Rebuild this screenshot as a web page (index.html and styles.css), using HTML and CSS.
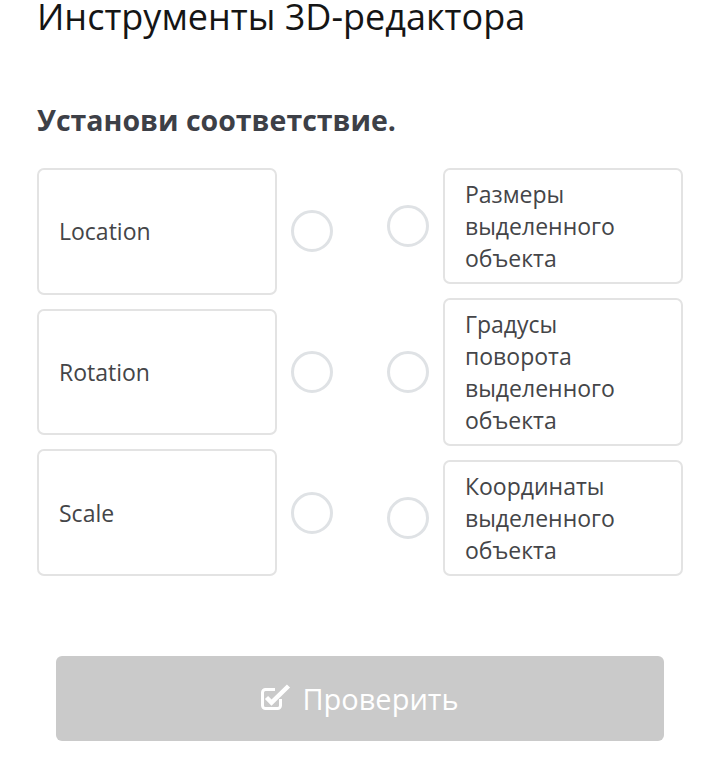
FILE: index.html
```html
<!DOCTYPE html>
<html lang="ru">
<head>
    <meta charset="UTF-8">
    <meta name="viewport" content="width=device-width, initial-scale=1.0">
    <title>Инструменты 3D-редактора</title>
    <link rel="stylesheet" href="styles.css">
</head>
<body>
    <div id="page">
        <h1 class="title">Инструменты 3D-редактора</h1>
        <div class="task">Установи соответствие.</div>

        <!-- Matching columns -->
        <div class="match">
            <div class="column left">
                <div class="item">
                    <div class="card">Location</div>
                    <span class="dot"></span>
                </div>
                <div class="item">
                    <div class="card">Rotation</div>
                    <span class="dot"></span>
                </div>
                <div class="item">
                    <div class="card">Scale</div>
                    <span class="dot"></span>
                </div>
            </div>
            <div class="column right">
                <div class="item">
                    <span class="dot"></span>
                    <div class="card">Размеры выделенного объекта</div>
                </div>
                <div class="item">
                    <span class="dot"></span>
                    <div class="card">Градусы поворота выделенного объекта</div>
                </div>
                <div class="item">
                    <span class="dot"></span>
                    <div class="card">Координаты выделенного объекта</div>
                </div>
            </div>
        </div>

        <button class="check-btn" disabled>
            <svg class="check-icon" width="30" height="26" viewBox="0 0 30 26">
                <path d="M19.5 15v6.5a3 3 0 0 1-3 3H4.5a3 3 0 0 1-3-3V8.5a3 3 0 0 1 3-3H14" fill="none" stroke="#fff" stroke-width="3"/>
                <path d="M5.5 13.5l5 5L27.5 2" fill="none" stroke="#fff" stroke-width="4.5"/>
            </svg>
            Проверить
        </button>
    </div>
</body>
</html>
```

FILE: styles.css
```css
body {
    margin: 0;
    background-color: #ffffff;
    font-family: "Open Sans", Arial, sans-serif;
}

#page {
    padding: 0 19px 0 37px;
}

.title {
    margin: 0;
    font-size: 36px;
    font-weight: 400;
    line-height: 34px;
    color: #151515;
}

.task {
    margin-top: 68px;
    font-size: 28.5px;
    font-weight: 700;
    line-height: 36px;
    color: #3d4047;
}

.match {
    display: flex;
    justify-content: space-between;
    margin-top: 30px;
}

.column {
    display: flex;
    flex-direction: column;
    gap: 14px;
}

.item {
    display: flex;
    align-items: center;
    gap: 13px;
}

.left .item {
    flex: 1;
    align-items: stretch;
}

.left .item .dot {
    align-self: center;
}

.card {
    width: 240px;
    box-sizing: border-box;
    border: 2px solid #e3e3e3;
    border-radius: 7px;
    padding: 8px 20px;
    font-size: 23px;
    line-height: 32px;
    color: #444548;
    display: flex;
    align-items: center;
}

.right .card {
    display: block;
}

.dot {
    width: 36px;
    height: 36px;
    border: 3px solid #dfe2e5;
    border-radius: 50%;
    flex-shrink: 0;
}

.left .dot {
    margin-left: 1px;
}

.right .item {
    gap: 14px;
}

.check-btn {
    display: flex;
    align-items: center;
    justify-content: center;
    gap: 11px;
    width: 608px;
    height: 85px;
    margin: 80px 0 0 19px;
    border: none;
    border-radius: 6px;
    background-color: #cacaca;
    color: #ffffff;
    font-family: "Open Sans", Arial, sans-serif;
    font-size: 29px;
    padding: 0;
}

.check-icon {
    margin-top: -4px;
}
```
